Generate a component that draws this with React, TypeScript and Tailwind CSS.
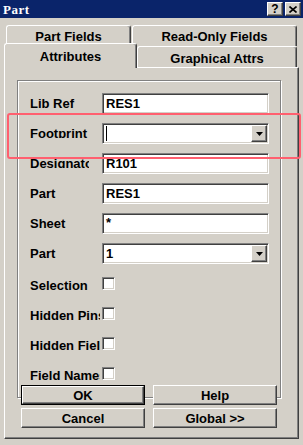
const sunken =
  "border border-t-[#808080] border-l-[#808080] border-b-white border-r-white shadow-[inset_1px_1px_#404040,inset_-1px_-1px_#d4d0c8]";
const raised =
  "border border-t-white border-l-white border-b-[#404040] border-r-[#404040] shadow-[inset_-1px_-1px_#808080]";
const tab =
  "flex items-center justify-center rounded-t-[3px] border-t border-l border-r border-t-white border-l-white border-r-[#404040] shadow-[inset_-1px_0_#808080] bg-[#d4d0c8] text-[13px] font-bold leading-[13px]";

const fields = [
  { label: "Lib Ref", value: "RES1" },
  { label: "Footprint", value: "", combo: true, cursor: true },
  { label: "Designator", value: "R101" },
  { label: "Part", value: "RES1" },
  { label: "Sheet", value: "*" },
  { label: "Part", value: "1", combo: true },
];

const checks = ["Selection", "Hidden Pins", "Hidden Fields", "Field Names"];

function DropArrow() {
  return (
    <div className={`${raised} w-[16px] h-full bg-[#d4d0c8] flex items-center justify-center`}>
      <svg width="7" height="4" viewBox="0 0 7 4">
        <polygon points="0,0 7,0 3.5,4" fill="#000" />
      </svg>
    </div>
  );
}

function FieldRow({ label, value, combo, cursor }: { label: string; value: string; combo?: boolean; cursor?: boolean }) {
  return (
    <div className="flex items-start h-[21px]">
      <div className="w-[72px] mt-[4px]">
        <div className="w-[59px] h-[11px] overflow-hidden whitespace-nowrap text-[13px] font-bold leading-[13px]">
          {label}
        </div>
      </div>
      <div className={`${sunken} w-[167px] h-[21px] bg-white flex items-stretch p-[1px]`}>
        <div className="flex-1 flex items-center pl-[2px] text-[13px] font-bold leading-[13px]">
          {cursor && <div className="w-[1px] h-[15px] bg-black" />}
          {value === "*" ? <span className="self-start mt-[1px]">*</span> : value}
        </div>
        {combo && <DropArrow />}
      </div>
    </div>
  );
}

function CheckRow({ label }: { label: string }) {
  return (
    <div className="flex items-center h-[21px]">
      <div className="w-[72px] h-[21px]">
        <div className="mt-[6px] w-[70px] h-[11px] overflow-hidden whitespace-nowrap text-[13px] font-bold leading-[13px]">
          {label}
        </div>
      </div>
      <div className={`${sunken} w-[13px] h-[13px] bg-white`} />
    </div>
  );
}

function Button({ label, isDefault }: { label: string; isDefault?: boolean }) {
  const inner = (
    <div className={`${raised} h-full w-full bg-[#d4d0c8] flex items-center justify-center text-[13px] font-bold leading-[13px]`}>
      {label}
    </div>
  );
  return isDefault ? <div className="h-[20px] border border-black">{inner}</div> : <div className="h-[20px]">{inner}</div>;
}

export default function App() {
  return (
    <div className="relative w-[303px] h-[445px] bg-[#d4d0c8] overflow-hidden text-black font-['Liberation_Sans',Arial,sans-serif]">
      {/* Title bar */}
      <div className="h-[18px] bg-[#0a246a] flex items-center justify-between pl-[3px] pr-[2px]">
        <span className="text-white text-[13px] font-bold leading-[13px] tracking-[0.5px] font-['Liberation_Serif',serif]">Part</span>
        <div className="flex gap-[2px]">
          <div className={`${raised} w-[16px] h-[14px] bg-[#d4d0c8] flex items-center justify-center text-[12px] font-bold leading-[12px]`}>
            ?
          </div>
          <div className={`${raised} w-[16px] h-[14px] bg-[#d4d0c8] flex items-center justify-center`}>
            <svg width="8" height="7" viewBox="0 0 8 7">
              <path d="M0.5 0.5 L7.5 6.5 M7.5 0.5 L0.5 6.5" stroke="#000" strokeWidth="1.6" />
            </svg>
          </div>
        </div>
      </div>

      {/* Tabs back row */}
      <div className="mt-[7px] ml-[6px] flex gap-[1px] h-[21px]">
        <div className={`${tab} w-[125px]`}>Part Fields</div>
        <div className={`${tab} w-[165px]`}>Read-Only Fields</div>
      </div>

      {/* Tabs front row */}
      <div className="relative z-10 -mt-[3px] ml-[4px] flex items-end h-[24px]">
        <div className={`${tab} w-[133px] h-[25px] -mb-[1px]`}>Attributes</div>
        <div className={`${tab} w-[160px] h-[21px] pt-[2px]`}>Graphical Attrs</div>
      </div>

      {/* Panel */}
      <div className="ml-[4px] w-[295px] h-[372px] border border-t-white border-l-white border-b-[#404040] border-r-[#404040] shadow-[inset_-1px_-1px_#808080]">
        <div className="ml-[12px] mt-[12px] w-[264px] h-[318px] border border-[#808080] shadow-[inset_1px_1px_#fff,1px_1px_#fff] pl-[12px] pt-[12px] flex flex-col gap-[9px]">
          {fields.map((f, i) => (
            <FieldRow key={i} {...f} />
          ))}
          {checks.map((c) => (
            <CheckRow key={c} label={c} />
          ))}
        </div>

        <div className="relative -mt-[13px] ml-[16px] grid grid-cols-[124px_124px] gap-x-[8px] gap-y-[3px]">
          <Button label="OK" isDefault />
          <Button label="Help" />
          <Button label="Cancel" />
          <Button label="Global >>" />
        </div>
      </div>

      {/* Highlight annotation */}
      <div className="absolute left-[7px] top-[113px] w-[294px] h-[46px] border-2 border-[#ff5f6f] rounded-[3px]" />
    </div>
  );
}
